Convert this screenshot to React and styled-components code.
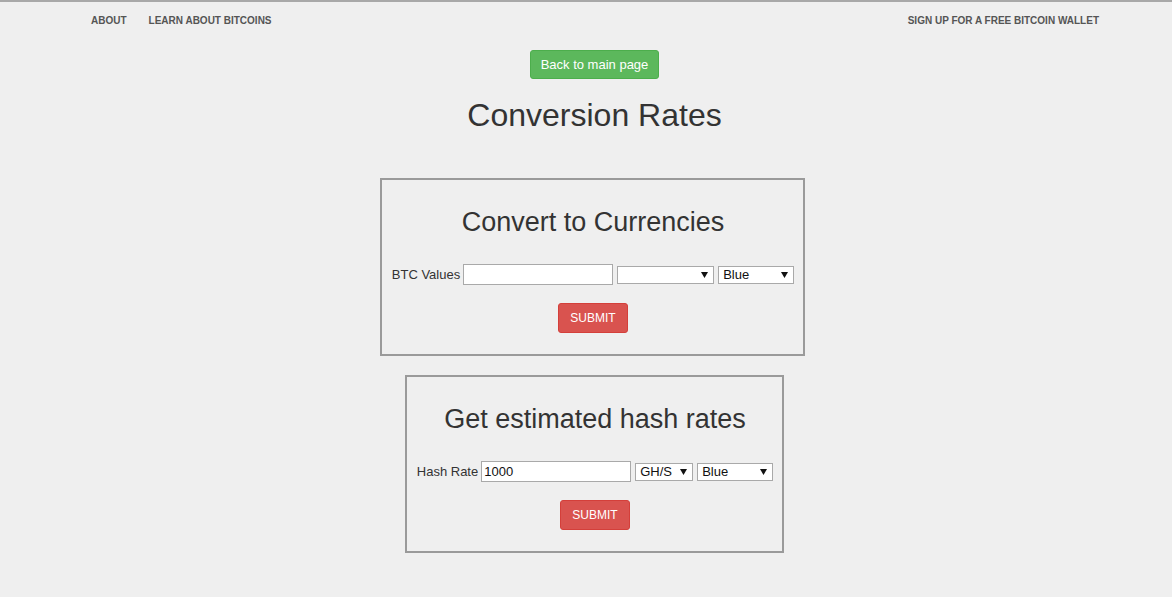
import React from "react";
import styled, { createGlobalStyle } from "styled-components";

const Global = createGlobalStyle`
  html, body { margin: 0; padding: 0; background: #efefef; }
  body { font-family: "Liberation Sans", Arial, sans-serif; color: #333; border-top: 2px solid #a8a8a8; }
  * { box-sizing: border-box; }
`;

const Nav = styled.nav`
  display: flex;
  justify-content: space-between;
  align-items: center;
  height: 38px;
  padding: 0 62px 0 80px;
`;

const NavGroup = styled.div`
  display: flex;
`;

const NavLink = styled.a`
  padding: 0 11px;
  font-size: 10px;
  font-weight: bold;
  text-transform: uppercase;
  color: #555;
  text-decoration: none;
  line-height: 36px;
`;

const Main = styled.main`
  display: flex;
  flex-direction: column;
  align-items: center;
  padding-left: 17px;
  padding-top: 10px;
`;

const BackButton = styled.button`
  height: 29px;
  padding: 0 10px;
  font-family: "Liberation Sans", Arial, sans-serif;
  font-size: 13px;
  color: #fff;
  background: #5cb85c;
  border: 1px solid #4cae4c;
  border-radius: 3px;
`;

const Title = styled.h1`
  margin: 18px 0 45px;
  font-size: 32px;
  font-weight: normal;
  line-height: 36px;
  color: #333;
`;

const Panel = styled.form`
  display: flex;
  flex-direction: column;
  align-items: center;
  border: 2px solid #9a9a9a;
  padding: 27px 9px 21px 10px;
  margin: 0 ${(p) => p.$shift || 0}px 19px 0;
`;

const PanelTitle = styled.h2`
  margin: 0 0 26px;
  font-size: 27px;
  font-weight: normal;
  line-height: 31px;
  color: #333;
`;

const Row = styled.div`
  display: flex;
  align-items: center;
  height: 21px;
`;

const Label = styled.label`
  font-size: 13px;
  color: #333;
  margin-right: 3px;
`;

const TextInput = styled.input`
  width: 150px;
  height: 21px;
  padding: 1px 2px;
  border: 1px solid #a9a9a9;
  background: #fff;
  font-family: "Liberation Sans", Arial, sans-serif;
  font-size: 13px;
  color: #111;
  outline: none;
`;

const SelectWrap = styled.span`
  position: relative;
  display: inline-flex;
  margin-left: 4px;
`;

const Select = styled.select`
  appearance: none;
  -webkit-appearance: none;
  width: ${(p) => p.$w}px;
  height: 18px;
  padding: 0 14px 0 4px;
  border: 1px solid #a9a9a9;
  border-radius: 0;
  background: #fff;
  font-family: "Liberation Sans", Arial, sans-serif;
  font-size: 13px;
  color: #111;
  outline: none;
`;

const Arrow = styled.svg`
  position: absolute;
  right: 6px;
  top: 6px;
  pointer-events: none;
`;

const SubmitButton = styled.button`
  margin-top: 18px;
  height: 30px;
  padding: 0 11px;
  font-family: "Liberation Sans", Arial, sans-serif;
  font-size: 12px;
  color: #fff;
  background: #d9534f;
  border: 1px solid #d43f3a;
  border-radius: 3px;
  text-transform: uppercase;
`;

function Dropdown({ width, options }) {
  return (
    <SelectWrap>
      <Select $w={width} defaultValue={options[0]}>
        {options.map((o) => (
          <option key={o} value={o}>{o}</option>
        ))}
      </Select>
      <Arrow width="7" height="6" viewBox="0 0 7 6">
        <path d="M0 0 H7 L3.5 6 Z" fill="#111" />
      </Arrow>
    </SelectWrap>
  );
}

export default function App() {
  return (
    <>
      <Global />
      <Nav>
        <NavGroup>
          <NavLink href="#">About</NavLink>
          <NavLink href="#">Learn about bitcoins</NavLink>
        </NavGroup>
        <NavGroup>
          <NavLink href="#">Sign up for a free bitcoin wallet</NavLink>
        </NavGroup>
      </Nav>
      <Main>
        <BackButton type="button">Back to main page</BackButton>
        <Title>Conversion Rates</Title>
        <Panel $shift={4} onSubmit={(e) => e.preventDefault()}>
          <PanelTitle>Convert to Currencies</PanelTitle>
          <Row>
            <Label>BTC Values</Label>
            <TextInput type="text" />
            <Dropdown width={97} options={[""]} />
            <Dropdown width={76} options={["Blue"]} />
          </Row>
          <SubmitButton type="submit">Submit</SubmitButton>
        </Panel>
        <Panel onSubmit={(e) => e.preventDefault()}>
          <PanelTitle>Get estimated hash rates</PanelTitle>
          <Row>
            <Label>Hash Rate</Label>
            <TextInput type="text" defaultValue="1000" />
            <Dropdown width={58} options={["GH/S"]} />
            <Dropdown width={76} options={["Blue"]} />
          </Row>
          <SubmitButton type="submit">Submit</SubmitButton>
        </Panel>
      </Main>
    </>
  );
}
